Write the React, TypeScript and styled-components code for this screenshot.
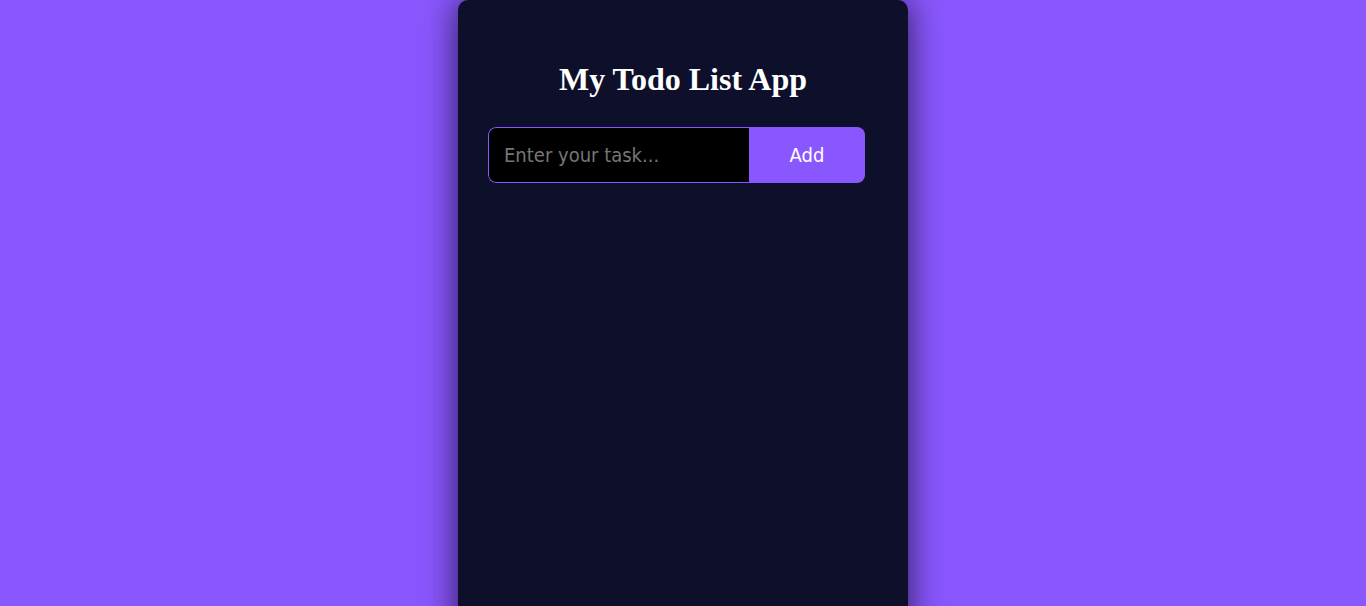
import React, {useState} from 'react';
import styled, {createGlobalStyle} from 'styled-components';

const GlobalStyle = createGlobalStyle`
    html, body {
        margin: 0;
        padding: 0;
        height: 100%;
        overflow: hidden;
        background: #8a57fe;
    }
`;

const App = () => {
    const [task, setTask] = useState('');
    const [todos, setTodos] = useState<string[]>([]);

    const addTask = (e: React.FormEvent) => {
        e.preventDefault();
        if (!task.trim()) {
            return;
        }
        setTodos([...todos, task.trim()]);
        setTask('');
    };

    return (
        <>
            <GlobalStyle/>
            <Page>
                <Card>
                    <Title>My Todo List App</Title>
                    <Form onSubmit={addTask}>
                        <TaskInput
                            value={task}
                            onChange={(e) => setTask(e.target.value)}
                            placeholder='Enter your task...'
                        />
                        <AddButton type='submit'>Add</AddButton>
                    </Form>
                    {todos.map((todo, i) => (
                        <TodoItem key={i}>{todo}</TodoItem>
                    ))}
                </Card>
            </Page>
        </>
    );
};

const Page = styled.div`
    display: flex;
    justify-content: center;
    height: 100vh;
`;

const Card = styled.div`
    width: 450px;
    height: 640px;
    box-sizing: border-box;
    padding: 60px 43px 0 30px;
    background: #0e0f2b;
    border-radius: 10px;
    box-shadow: 0 0 35px rgba(0, 0, 0, 0.7);
`;

const Title = styled.h1`
    margin: 0 0 29px;
    padding-left: 13px;
    text-align: center;
    font-family: 'Liberation Serif', serif;
    font-size: 32px;
    font-weight: bold;
    line-height: 38px;
    color: #ffffff;
`;

const Form = styled.form`
    display: flex;
    width: 377px;
    height: 56px;
    border-radius: 8px;
    overflow: hidden;
`;

const TaskInput = styled.input`
    flex: 1;
    min-width: 0;
    box-sizing: border-box;
    padding: 0 15px;
    border: 1px solid #8a57fe;
    border-right: none;
    border-radius: 8px 0 0 8px;
    background: #000000;
    color: #ffffff;
    font-family: 'DejaVu Sans Condensed', 'DejaVu Sans', sans-serif;
    font-size: 20px;
    outline: none;

    &::placeholder {
        color: #767676;
    }
`;

const AddButton = styled.button`
    width: 116px;
    border: none;
    background: #8a57fe;
    color: #ffffff;
    font-family: 'DejaVu Sans Condensed', 'DejaVu Sans', sans-serif;
    font-size: 20px;
    cursor: pointer;
`;

const TodoItem = styled.div`
    margin-top: 12px;
    padding: 12px 15px;
    border-radius: 6px;
    background: #8a57fe;
    color: #ffffff;
    font-family: 'DejaVu Sans Condensed', 'DejaVu Sans', sans-serif;
    font-size: 16px;
`;

export default App;
